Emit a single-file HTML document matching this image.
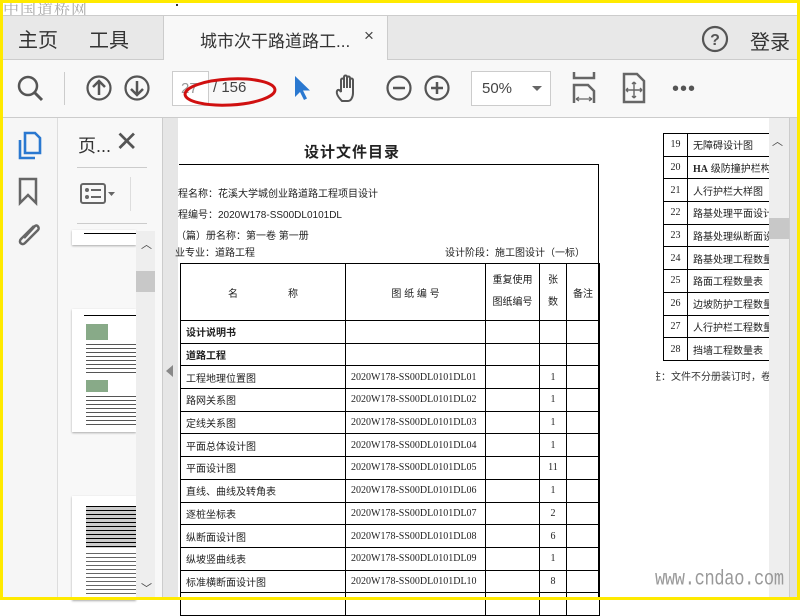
<!DOCTYPE html>
<html><head><meta charset="utf-8"><style>
*{margin:0;padding:0;box-sizing:border-box}
body{width:800px;height:600px;overflow:hidden;background:#fff;font-family:"Liberation Sans","Noto Sans CJK SC",sans-serif;position:relative}
.a{position:absolute}
.cj{font-family:"Liberation Serif","Noto Serif CJK SC",serif}
.tb td{border:1px solid #000;font-size:10px;color:#222;height:22.7px;padding:0 5px;white-space:nowrap;overflow:hidden}
.tb{border-collapse:collapse;table-layout:fixed}
.num{text-align:center}
</style></head><body>
<div class="a" style="left:0;top:0;width:800px;height:600px;border:3px solid #ffea00;z-index:50;pointer-events:none"></div>
<div class="a" style="left:3px;top:1px;font-size:16px;line-height:16px;color:#aaa;letter-spacing:1px;font-family:'Noto Serif CJK SC',serif">中国道桥网</div>
<div class="a" style="left:176px;top:4px;width:2px;height:2px;background:#333"></div>
<!-- tab bar -->
<div class="a" style="left:3px;top:15px;width:794px;height:45px;background:#e8e8e8;border-top:1px solid #ccc;border-bottom:1px solid #ccc"></div>
<div class="a" style="left:18px;top:24px;font-size:20px;color:#333">主页</div>
<div class="a" style="left:89px;top:24px;font-size:20px;color:#333">工具</div>
<div class="a" style="left:163px;top:15px;width:225px;height:45px;background:#f8f8f8;border-left:1px solid #ccc;border-right:1px solid #ccc;border-top:1px solid #ccc"></div>
<div class="a" style="left:200px;top:27px;font-size:17px;color:#333">城市次干路道路工...</div>
<div class="a" style="left:364px;top:26px;font-size:17px;color:#444">×</div>
<svg class="a" style="left:701px;top:25px" width="28" height="28"><circle cx="14" cy="14" r="12" fill="none" stroke="#555" stroke-width="2.2"/><text x="14" y="20" font-size="16" text-anchor="middle" fill="#555" font-family="Liberation Sans" font-weight="bold">?</text></svg>
<div class="a" style="left:750px;top:26px;font-size:20px;color:#333">登录</div>
<!-- toolbar -->
<div class="a" style="left:3px;top:60px;width:794px;height:58px;background:#f8f8f8;border-bottom:1px solid #ccc"></div>
<svg class="a" style="left:15px;top:73px" width="30" height="30"><circle cx="13" cy="13" r="9" fill="none" stroke="#555" stroke-width="2.5"/><line x1="19.5" y1="19.5" x2="27" y2="27" stroke="#555" stroke-width="3"/></svg>
<div class="a" style="left:64px;top:72px;width:1px;height:33px;background:#ccc"></div>
<svg class="a" style="left:85px;top:74px" width="28" height="28"><circle cx="14" cy="14" r="11.5" fill="none" stroke="#555" stroke-width="2.2"/><path d="M14 21V7M8 13l6-6 6 6" fill="none" stroke="#555" stroke-width="2.5"/></svg>
<svg class="a" style="left:123px;top:74px" width="28" height="28"><circle cx="14" cy="14" r="11.5" fill="none" stroke="#555" stroke-width="2.2"/><path d="M14 7v14M8 15l6 6 6-6" fill="none" stroke="#555" stroke-width="2.5"/></svg>
<div class="a" style="left:172px;top:71px;width:37px;height:35px;background:#fff;border:1px solid #ccc"></div>
<div class="a" style="left:181px;top:80px;font-size:15px;color:#999">27</div>
<div class="a" style="left:213px;top:79px;font-size:15px;color:#444">/ 156</div>
<svg class="a" style="left:180px;top:76px" width="100" height="38"><ellipse cx="50" cy="16" rx="45" ry="13" fill="none" stroke="#d01010" stroke-width="3" transform="rotate(-3 50 16)"/></svg>
<svg class="a" style="left:292px;top:74px" width="22" height="28"><path d="M3 2l0 21 5-5 4 8 3-1.5-4-8h7z" fill="#2a78d0"/></svg>
<svg class="a" style="left:334px;top:73px" width="32" height="32"><path d="M8 28c-3-3-6-7-5-10 1-2 3-1 4 1V7c0-2 3-2 3 0v8V4c0-2 3-2 3 0v11V5c0-2 3-2 3 0v10V7c0-2 3-2 3 0v13c0 4-2 8-5 8z" fill="none" stroke="#555" stroke-width="2"/></svg>
<svg class="a" style="left:385px;top:74px" width="28" height="28"><circle cx="14" cy="14" r="11.5" fill="none" stroke="#555" stroke-width="2.2"/><path d="M8 14h12" stroke="#555" stroke-width="2.5"/></svg>
<svg class="a" style="left:423px;top:74px" width="28" height="28"><circle cx="14" cy="14" r="11.5" fill="none" stroke="#555" stroke-width="2.2"/><path d="M8 14h12M14 8v12" stroke="#555" stroke-width="2.5"/></svg>
<div class="a" style="left:471px;top:71px;width:80px;height:35px;background:#fff;border:1px solid #ccc"></div>
<div class="a" style="left:482px;top:80px;font-size:15px;color:#444">50%</div>
<div class="a" style="left:532px;top:86px;width:0;height:0;border-left:5px solid transparent;border-right:5px solid transparent;border-top:5px solid #666"></div>
<svg class="a" style="left:570px;top:72px" width="28" height="32"><path d="M4 0v6h20V0" fill="none" stroke="#666" stroke-width="2.5"/><path d="M4 31V13h14l6 6v12" fill="none" stroke="#666" stroke-width="2.5"/><path d="M6 27h16M6 27l3-2M6 27l3 2M22 27l-3-2M22 27l-3 2" stroke="#666" stroke-width="1.3"/></svg>
<svg class="a" style="left:620px;top:72px" width="28" height="32"><path d="M4 2h13l7 7v21H4z" fill="none" stroke="#666" stroke-width="2.5"/><path d="M14 10v16M6 18h16M14 10l-2 2M14 10l2 2M14 26l-2-2M14 26l2-2M6 18l2-2M6 18l2 2M22 18l-2-2M22 18l-2 2" stroke="#666" stroke-width="1.4"/></svg>
<div class="a" style="left:672px;top:78px;font-size:20px;color:#555;letter-spacing:1px">•••</div>
<!-- left icon column -->
<div class="a" style="left:3px;top:118px;width:55px;height:482px;background:#f6f6f6;border-right:1px solid #ddd"></div>
<svg class="a" style="left:16px;top:130px" width="28" height="32"><path d="M9 3h10l5 5v15H9z M4 10v18h15" fill="none" stroke="#2a78d0" stroke-width="2.6"/></svg>
<svg class="a" style="left:18px;top:177px" width="22" height="30"><path d="M2 2h16v24l-8-8-8 8z" fill="none" stroke="#666" stroke-width="2.5"/></svg>
<svg class="a" style="left:14px;top:220px" width="30" height="30"><path d="M20 6L7 19c-3 3 1 7 4 4l13-13c2-2-1-6-3-4L10 18" fill="none" stroke="#666" stroke-width="2.5"/></svg>
<!-- panel -->
<div class="a" style="left:58px;top:118px;width:105px;height:482px;background:#f8f8f8;border-right:1px solid #ccc"></div>
<div class="a" style="left:78px;top:132px;font-size:18px;color:#333">页...</div>
<div class="a" style="left:115px;top:125px;font-size:28px;color:#555;font-weight:300">✕</div>
<div class="a" style="left:77px;top:167px;width:70px;height:1px;background:#ccc"></div>
<svg class="a" style="left:80px;top:182px" width="40" height="24"><rect x="1" y="2" width="24" height="19" rx="2" fill="none" stroke="#666" stroke-width="2"/><circle cx="7" cy="8" r="2" fill="#666"/><circle cx="7" cy="15" r="2" fill="#666"/><path d="M11 8h10M11 15h10" stroke="#666" stroke-width="2"/><path d="M28 10h7l-3.5 4z" fill="#666"/></svg>
<div class="a" style="left:130px;top:177px;width:1px;height:34px;background:#ddd"></div>
<div class="a" style="left:77px;top:223px;width:70px;height:1px;background:#ccc"></div>
<div class="a" style="left:72px;top:230px;width:64px;height:15px;background:#fff;box-shadow:0 1px 2px #aaa"></div>
<div class="a" style="left:84px;top:233px;width:52px;height:1px;background:#000"></div>
<div class="a" style="left:72px;top:309px;width:64px;height:123px;background:#fff;box-shadow:0 1px 2px #aaa;overflow:hidden">
 <div style="margin:6px 0 0 12px;width:60px;height:1px;background:#000"></div>
 <div style="margin:8px 0 0 14px;width:22px;height:16px;background:#8a8"></div>
 <div style="margin:4px 0 0 14px;width:50px;height:30px;background:repeating-linear-gradient(#555 0 1px,#fff 1px 4px)"></div>
 <div style="margin:6px 0 0 14px;width:22px;height:12px;background:#8a8"></div>
 <div style="margin:4px 0 0 14px;width:50px;height:30px;background:repeating-linear-gradient(#555 0 1px,#fff 1px 4px)"></div>
</div>
<div class="a" style="left:72px;top:496px;width:64px;height:104px;background:#fff;box-shadow:0 1px 2px #aaa;overflow:hidden">
 <div style="margin:10px 0 0 14px;width:50px;height:42px;background:repeating-linear-gradient(#000 0 1px,#ccc 1px 4px)"></div>
 <div style="margin:5px 0 0 14px;width:50px;height:45px;background:repeating-linear-gradient(#666 0 1px,#fff 1px 4px)"></div>
</div>
<div class="a" style="left:136px;top:231px;width:19px;height:369px;background:#eee"></div>
<div class="a" style="left:136px;top:271px;width:19px;height:21px;background:#c8c8c8"></div>
<div class="a" style="left:141px;top:236px;font-size:11px;color:#444">︿</div>
<div class="a" style="left:141px;top:580px;font-size:11px;color:#444">﹀</div>
<!-- doc area -->
<div class="a" style="left:163px;top:118px;width:634px;height:482px;background:#e6e6e6"></div>
<div class="a" style="left:166px;top:365px;width:0;height:0;border-top:6px solid transparent;border-bottom:6px solid transparent;border-right:7px solid #888"></div>
<div class="a" style="left:178px;top:118px;width:478px;height:482px;background:#fff"></div>
<div class="a" style="left:656px;top:118px;width:113px;height:482px;background:#fff;overflow:hidden">
 <table class="tb" style="position:absolute;left:7px;top:15px;width:150px">
  <col style="width:24px"><col style="width:126px">
  <tr><td class="num cj">19</td><td>无障碍设计图</td></tr>
  <tr><td class="num cj">20</td><td><b class="cj">HA</b> 级防撞护栏构</td></tr>
  <tr><td class="num cj">21</td><td>人行护栏大样图</td></tr>
  <tr><td class="num cj">22</td><td>路基处理平面设计</td></tr>
  <tr><td class="num cj">23</td><td>路基处理纵断面设</td></tr>
  <tr><td class="num cj">24</td><td>路基处理工程数量</td></tr>
  <tr><td class="num cj">25</td><td>路面工程数量表</td></tr>
  <tr><td class="num cj">26</td><td>边坡防护工程数量</td></tr>
  <tr><td class="num cj">27</td><td>人行护栏工程数量</td></tr>
  <tr><td class="num cj">28</td><td>挡墙工程数量表</td></tr>
 </table>
 <div style="position:absolute;left:-5px;top:250px;font-size:10px;color:#333;white-space:nowrap">注：文件不分册装订时，卷</div>
</div>
<div class="a" style="left:769px;top:118px;width:20px;height:482px;background:#eee"></div>
<div class="a" style="left:769px;top:218px;width:20px;height:21px;background:#c8c8c8"></div>
<div class="a" style="left:772px;top:133px;font-size:11px;color:#444">︿</div>
<div class="a" style="left:789px;top:118px;width:8px;height:482px;background:#e0e0e0;border-left:1px solid #ccc"></div>
<!-- main page content -->
<div class="a" style="left:304px;top:141px;font-size:15px;font-weight:bold;color:#222;letter-spacing:1px">设计文件目录</div>
<div class="a" style="left:179px;top:164px;width:420px;height:436px;border:1.5px solid #000;border-left:none;border-bottom:none"></div>
<div class="a" style="left:178px;top:185px;font-size:10px;color:#222">程名称：花溪大学城创业路道路工程项目设计</div>
<div class="a" style="left:178px;top:206px;font-size:10px;color:#222">程编号：2020W178-SS00DL0101DL</div>
<div class="a" style="left:176px;top:227px;font-size:10px;color:#222">（篇）册名称：第一卷 第一册</div>
<div class="a" style="left:175px;top:244px;font-size:10px;color:#222">业专业：道路工程</div>
<div class="a" style="left:445px;top:244px;font-size:10px;color:#222">设计阶段：施工图设计（一标）</div>
<table class="tb a" style="left:180px;top:263px;width:419px;border-top:1.5px solid #000">
 <col style="width:165px"><col style="width:140px"><col style="width:54px"><col style="width:27px"><col style="width:33px">
 <tr style="height:57px"><td style="text-align:center;font-size:10px">名&nbsp;&nbsp;&nbsp;&nbsp;&nbsp;&nbsp;&nbsp;&nbsp;&nbsp;&nbsp;&nbsp;&nbsp;&nbsp;&nbsp;&nbsp;&nbsp;&nbsp;&nbsp;称</td><td style="text-align:center">图 纸 编 号</td><td style="text-align:center;line-height:22px;white-space:normal;padding:0 2px">重复使用图纸编号</td><td style="text-align:center;white-space:normal;line-height:22px;padding:0 7px">张数</td><td style="text-align:center;padding:0">备注</td></tr>
 <tr><td><b>设计说明书</b></td><td></td><td></td><td></td><td></td></tr>
 <tr><td><b>道路工程</b></td><td></td><td></td><td></td><td></td></tr>
 <tr><td>工程地理位置图</td><td class="cj">2020W178-SS00DL0101DL01</td><td></td><td class="num cj">1</td><td></td></tr>
 <tr><td>路网关系图</td><td class="cj">2020W178-SS00DL0101DL02</td><td></td><td class="num cj">1</td><td></td></tr>
 <tr><td>定线关系图</td><td class="cj">2020W178-SS00DL0101DL03</td><td></td><td class="num cj">1</td><td></td></tr>
 <tr><td>平面总体设计图</td><td class="cj">2020W178-SS00DL0101DL04</td><td></td><td class="num cj">1</td><td></td></tr>
 <tr><td>平面设计图</td><td class="cj">2020W178-SS00DL0101DL05</td><td></td><td class="num cj">11</td><td></td></tr>
 <tr><td>直线、曲线及转角表</td><td class="cj">2020W178-SS00DL0101DL06</td><td></td><td class="num cj">1</td><td></td></tr>
 <tr><td>逐桩坐标表</td><td class="cj">2020W178-SS00DL0101DL07</td><td></td><td class="num cj">2</td><td></td></tr>
 <tr><td>纵断面设计图</td><td class="cj">2020W178-SS00DL0101DL08</td><td></td><td class="num cj">6</td><td></td></tr>
 <tr><td>纵坡竖曲线表</td><td class="cj">2020W178-SS00DL0101DL09</td><td></td><td class="num cj">1</td><td></td></tr>
 <tr><td>标准横断面设计图</td><td class="cj">2020W178-SS00DL0101DL10</td><td></td><td class="num cj">8</td><td></td></tr>
 <tr><td></td><td></td><td></td><td></td><td></td></tr>
</table>
<div class="a" style="left:655px;top:568px;font-size:17px;line-height:20px;color:#999;font-family:'Liberation Mono',monospace;letter-spacing:-0.3px;transform:scaleY(1.25);transform-origin:0 0;z-index:40">www.cndao.com</div>
</body></html>
